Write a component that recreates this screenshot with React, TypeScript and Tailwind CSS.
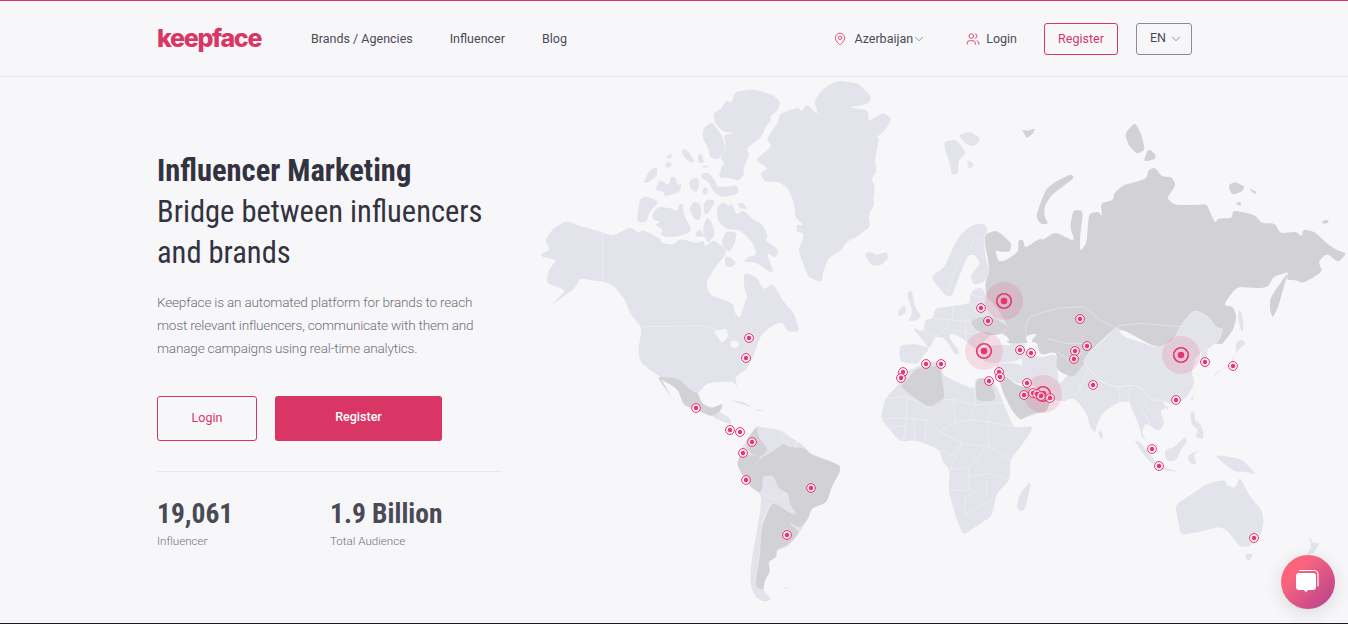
import React from 'react';
import { ChevronDown, MapPin, Users } from 'lucide-react';

// map is traced from crops, each group keeps the crop's 3x coordinates
const A = 'translate(540 80) scale(.3333)';
const B = 'translate(940 80) scale(.3333)';
const C = 'translate(640 340) scale(.3333)';
const D = 'translate(960 340) scale(.3333)';
const E = 'translate(880 220) scale(.3333)';
const F = 'translate(1060 300) scale(.3333)';

type Shape = [string, string];

const lightLand: Shape[] = [
  // north america
  [A, '5,520 30,510 15,480 40,445 80,422 110,435 190,458 220,468 270,440 295,458 310,450 360,475 365,490 400,495 420,475 470,490 490,480 495,500 520,480 550,500 560,520 535,550 520,570 498,610 510,645 580,670 585,700 600,715 610,680 622,650 612,620 612,578 650,590 670,630 700,610 730,665 762,700 780,755 745,755 725,725 690,740 660,770 640,830 618,870 585,890 595,940 585,905 540,905 500,910 475,940 430,975 415,930 360,890 330,870 300,845 295,810 305,745 285,720 270,700 255,660 225,620 195,605 150,600 120,595 105,625 70,650 30,678 60,650 75,630 50,620 20,610 25,570 50,540 5,530'],
  [A, '520,100 545,85 560,60 575,70 585,35 640,28 700,45 720,65 715,90 690,110 695,120 680,135 665,170 640,190 620,205 628,225 610,265 612,285 595,302 570,295 535,293 548,250 560,262 540,232 560,205 550,165 585,160 550,155 525,130'],
  [A, '490,145 515,125 545,165 558,205 535,240 510,232 505,205 488,175'],
  [A, '380,228 395,222 395,235 380,235'],
  [A, '375,250 392,245 395,258 380,265'],
  [A, '425,207 440,208 465,245 450,248 430,230'],
  [A, '473,225 485,220 492,245 485,252 475,245'],
  [A, '487,258 500,255 505,262 490,263'],
  [A, '310,310 330,268 352,262 350,290 322,308'],
  [A, '345,330 360,298 385,318 395,288 408,295 412,315 425,310 420,335 375,350 370,335'],
  [A, '448,300 475,292 478,320 468,338 450,325'],
  [A, '485,280 505,278 525,300 530,320 560,320 590,315 598,335 585,345 545,352 520,335 505,305 485,295'],
  [A, '488,325 500,322 505,340 490,345'],
  [A, '290,420 300,355 325,350 358,365 328,395 320,425 300,428'],
  [A, '335,405 355,380 395,385 410,395 420,370 430,372 430,400 455,450 440,462 410,470 378,472 360,462 370,450 345,435 362,425 340,420'],
  [A, '448,385 460,365 480,370 485,395 480,420 462,418'],
  [A, '490,375 500,358 525,362 515,385 500,405 492,398'],
  [A, '535,375 555,365 565,380 575,370 590,405 610,390 640,420 665,430 685,470 675,480 718,510 705,535 680,518 695,560 700,575 685,575 650,548 610,545 625,530 650,525 640,490 600,450 560,448 535,425 530,400'],
  [A, '592,370 610,368 622,388 600,385'],
  [A, '490,440 500,412 515,425 525,465 505,490 490,465'],
  [A, '465,460 480,448 495,470 470,470'],
  [A, '555,455 590,455 585,490 570,515 555,510 545,490'],
  [A, '555,530 570,530 590,550 570,563 555,555'],
  // greenland and iceland
  [A, '875,10 900,2 955,10 995,50 985,72 925,82 985,90 985,125 1030,97 1055,115 1040,145 1020,165 1005,170 1018,172 1005,240 1010,275 995,295 1005,325 1000,355 1003,375 985,405 990,435 985,445 950,470 920,485 905,510 865,535 850,575 845,605 825,600 805,590 785,540 775,510 790,475 790,460 770,455 770,435 790,435 765,410 765,380 745,325 715,305 675,305 660,280 685,265 645,240 695,200 680,175 715,125 720,100 775,82 785,95 800,72 835,105 822,65 845,30'],
  [A, '975,520 990,515 1010,525 1040,515 1045,535 1025,555 1000,558 985,545'],
  [B, '10,185 50,178 80,220 55,240 55,280 35,285 32,260 20,225'],
  [B, '55,165 90,155 122,175 105,198 80,195'],
  [B, '80,240 100,250 100,262 85,265'],
  // europe
  [A, '1100,640 1115,630 1125,680 1145,710 1125,722 1105,725 1118,695'],
  [A, '1073,695 1095,672 1097,700 1078,710'],
  [E, '155,168 195,140 215,90 240,45 275,15 310,10 325,30 310,50 318,120 330,150 315,185 280,195 272,165 290,145 300,130 285,105 265,105 245,150 230,190 215,230 195,225 175,200 165,190'],
  [E, '95,320 130,335 135,300 160,295 165,265 220,258 270,250 270,225 285,205 310,205 320,235 345,255 385,320 370,340 345,345 330,345 310,370 295,400 285,385 260,365 240,350 215,340 205,350 240,395 228,408 195,355 165,350 150,385 110,372 60,375 58,410 65,428 115,432 130,405 150,388'],
  [E, '300,385 345,375 385,375 430,385 440,410 400,425 345,430 310,425'],
  [E, '385,365 430,370 440,395 395,385'],
  [E, '430,395 455,385 480,415 530,400 535,490 565,520 560,545 520,540 480,520 450,490 425,440'],
  [E, '345,430 425,430 450,490 410,490 380,470 355,465'],
  // africa
  [C, '775,135 790,100 830,80 860,68 905,62 905,105 1005,150 1005,115 1065,125 1090,190 1120,260 1132,262 1182,258 1150,310 1110,360 1110,420 1070,460 1055,530 1000,565 970,585 950,540 925,450 930,390 905,360 900,330 830,300 780,305 745,265 722,235 735,175'],
  [D, '170,500 180,460 215,420 195,510 178,513'],
  // south america
  [C, '320,300 330,285 350,258 365,262 425,270 450,290 495,320 510,340 600,375 600,395 575,440 560,488 515,505 505,535 480,575 445,620 410,630 410,650 385,665 390,695 375,720 370,750 395,780 370,785 345,770 330,730 335,660 360,520 365,465 330,440 290,375 300,345 295,340'],
  [C, '215,230 240,215 270,235 275,255 250,245'],
  [C, '265,180 310,185 340,205 300,190'],
  [C, '345,208 375,210 350,214'],
  [C, '425,745 445,742 440,748'],
  // south east asia and oceania
  [F, '85,205 130,250 175,262 210,255 240,260 250,290 205,305 180,305 130,335 110,375 105,400 90,380 80,340 45,295 0,300 -20,270 0,250 40,210 70,185'],
  [F, '205,305 240,260 300,295 320,320 300,335 315,370 295,395 275,380 255,370 245,400 260,420 245,410 235,370'],
  [F, '455,235 490,205 520,185 530,150 525,130 545,118 558,130 535,150 525,165 505,200 470,215'],
  [F, '535,30 545,35 552,80 545,100 535,60'],
  [F, '115,395 125,392 130,412 120,418'],
  [F, '222,420 240,425 275,470 290,490 280,495 255,470'],
  [F, '290,495 355,515 340,515 300,508'],
  [F, '315,450 345,440 375,410 382,425 365,445 350,480 325,485 315,470'],
  [F, '385,465 420,450 400,465 410,490 395,495 385,480'],
  [F, '390,340 403,332 405,360 420,370 430,395 430,418 405,410 415,390 395,375'],
  [F, '465,465 510,470 550,480 590,525 560,515 525,515 490,490'],
  [F, '392,300 400,283 398,305'],
  [F, '315,322 325,318 325,330'],
  [D, '645,495 700,460 725,440 760,425 795,420 800,435 825,445 840,410 870,470 905,510 912,545 900,590 870,620 840,620 820,595 800,570 775,560 720,575 662,585 655,545'],
  [D, '855,640 880,642 870,662 860,660'],
  [D, '1045,585 1060,610 1080,610 1060,640 1040,645 1055,620'],
];

const darkLand: Shape[] = [
  // russia with central asia and mongolia, china is laid over it afterwards
  [B, '130,465 170,450 215,490 210,515 185,515 165,510 175,545 200,540 235,515 235,480 250,480 255,505 300,475 310,480 345,455 405,485 390,440 400,390 430,392 420,470 420,515 440,490 445,420 450,400 475,395 487,410 482,370 520,360 522,340 550,315 590,305 620,295 625,270 645,262 665,290 695,290 708,315 680,355 705,375 770,375 800,372 810,395 825,430 835,415 875,415 880,390 945,405 965,430 1005,430 1020,460 1070,455 1085,470 1090,448 1125,455 1160,490 1190,510 1220,520 1195,548 1160,520 1135,545 1148,575 1090,610 1065,600 1040,600 1045,575 1000,590 985,620 960,625 890,620 850,675 880,680 890,710 880,750 845,795 835,790 660,810 530,738 445,820 440,840 400,895 350,870 350,815 300,825 290,785 250,790 205,790 180,770 190,760 205,740 165,675 140,655 135,610 150,570'],
  [B, '990,660 1000,640 1045,575 1030,625 1015,680 998,715 990,690'],
  [B, '288,408 305,360 320,325 355,300 395,282 402,295 370,318 335,345 315,375 312,405 325,433 300,432'],
  [B, '555,160 585,127 605,165 615,210 590,222 565,195'],
  [B, '610,245 625,205 648,225 645,238'],
  [B, '865,315 885,305 915,320 905,335 875,345'],
  [B, '925,325 952,335 945,343'],
  [B, '885,372 900,365 905,378'],
  [B, '1145,425 1160,418 1168,428 1150,432'],
  [B, '245,150 265,152 285,145 280,160 260,175 252,160'],
  // ukraine, saudi arabia, egypt, algeria
  [E, '270,305 300,290 345,295 385,320 370,340 345,345 320,345 285,330'],
  [E, '355,470 380,470 410,495 450,505 480,530 510,545 500,575 470,580 440,590 420,600 395,570 370,520'],
  [C, '1008,115 1050,115 1070,183 1008,183'],
  [C, '780,140 795,125 830,85 900,75 905,105 915,178 868,205'],
  // mexico
  [C, '55,110 115,115 150,150 175,160 185,190 215,205 250,190 240,215 215,230 175,212 130,195 115,150 85,130 65,120'],
  [C, '60,110 95,175 75,145 55,115'],
  // south america
  [C, '340,380 370,350 405,330 430,310 445,320 495,325 510,343 600,375 600,395 575,440 560,488 515,505 505,535 480,565 445,545 470,520 450,495 445,460 415,445 400,405 365,410 345,400'],
  [C, '320,300 350,258 355,290 385,330 365,350 340,345 320,325'],
  [C, '300,345 335,345 365,350 340,380 345,400 370,405 365,460 330,440 290,375'],
  [C, '395,490 415,495 450,520 470,525 445,550 480,575 450,610 410,630 410,650 385,665 390,695 375,720 370,750 345,740 360,650 365,560'],
];

// laid over the dark block
const overDark: Shape[] = [
  [F, '170,78 190,110 240,125 300,145 345,115 360,80 400,30 440,45 470,85 490,85 475,125 440,150 420,160 395,190 410,175 395,215 405,250 380,295 340,315 300,300 270,300 240,260 210,255 175,262 130,250 85,205 70,185 85,160 120,130 140,110'],
  [F, '420,160 445,140 440,185 445,205 425,205'],
];

const water: Shape[] = [
  [E, '436,348 472,340 452,365 480,408 462,412 445,375'],
  [E, '345,345 372,342 392,362 345,372 322,362'],
  [A, '520,755 560,745 565,770 545,790 530,765'],
  [A, '575,780 600,790 590,805 570,800'],
  [C, '1028,545 1035,538 1038,545 1030,552'],
];

const borders: Shape[] = [
  [A, '188,455 188,605 225,625 255,670 300,735'],
  [A, '305,740 495,738 530,750 600,790'],
  [E, '435,320 450,290 530,265 610,260 660,300 700,320'],
  [E, '435,320 440,345'],
  [E, '500,355 560,370 600,370 640,375'],
  [E, '530,395 560,415 610,400'],
  [E, '95,320 130,335 165,350'],
  [E, '160,295 215,300 220,258'],
  [E, '215,300 270,305 285,330 320,345'],
  [E, '270,250 300,290'],
  [E, '200,310 240,350'],
  [E, '255,310 260,365'],
  [E, '165,350 205,320'],
  [E, '230,130 205,215'],
  [E, '270,90 280,60 310,50'],
  [E, '225,330 270,340 300,375'],
  [E, '270,225 310,232'],
  [E, '275,205 320,215'],
  [F, '170,78 240,70 300,75 360,80'],
  [F, '45,295 85,205'],
  [F, '175,262 180,305'],
  [F, '210,255 205,305'],
  [F, '250,310 285,350 315,370'],
  [F, '240,315 275,380'],
  [C, '735,175 800,170 865,205 905,180 940,178 945,250 900,275 860,240 800,235 730,235'],
  [C, '800,170 800,235 790,300'],
  [C, '860,240 855,300'],
  [C, '820,240 825,300'],
  [C, '745,265 800,255'],
  [C, '940,178 1005,195 1090,190'],
  [C, '1005,150 1005,195 990,240'],
  [C, '945,250 990,240 1040,245 1120,260'],
  [C, '1040,245 1060,200'],
  [C, '1040,245 1050,320'],
  [C, '900,275 965,310 1050,320 1110,360'],
  [C, '965,310 930,390 990,380 1040,320'],
  [C, '905,330 935,345 965,310'],
  [C, '985,380 990,450 920,450'],
  [C, '990,410 1050,400 1110,420'],
  [C, '1010,455 975,470 975,525 1055,480'],
  [C, '1040,420 1040,470'],
  [C, '365,460 400,480 445,460'],
  [C, '390,490 360,560'],
  [C, '425,300 440,275'],
  [C, '470,300 465,325'],
];

const pins = [
  [749, 338], [746, 358], [696, 408], [730, 430], [740, 432], [752, 442], [743, 453], [746, 480],
  [811, 488], [787, 535], [903, 372], [901, 378], [926, 364], [941, 364], [981, 308], [988, 321],
  [1020, 350], [1031, 353], [1080, 319], [1075, 351], [1074, 359], [1087, 346], [999, 372], [1000, 377],
  [989, 381], [1027, 383], [1024, 395], [1033, 393], [1037, 394], [1050, 398], [1041, 396], [1093, 385],
  [1205, 362], [1233, 366], [1176, 400], [1152, 449], [1159, 466], [1254, 538],
];
const bigPins = [[1004, 301], [984, 351], [1043, 394], [1181, 355]];

// rounds every corner a little so the coasts do not look cut with a ruler
const coast = (points: string) => {
  const pts = points.split(' ').map(p => p.split(',').map(Number));
  const n = pts.length;
  const mix = (a: number[], b: number[]) => `${a[0] + (b[0] - a[0]) * 0.3} ${a[1] + (b[1] - a[1]) * 0.3}`;
  return pts
    .map((p, i) => {
      const prev = pts[(i + n - 1) % n];
      const next = pts[(i + 1) % n];
      return `${i === 0 ? 'M' : 'L'}${mix(p, prev)}Q${p[0]} ${p[1]} ${mix(p, next)}`;
    })
    .join('') + 'Z';
};

const WorldMap = () => (
  <svg viewBox="540 77 808 546" className="w-[808px] h-[546px] shrink-0">
    {lightLand.map(([t, p], i) => <path key={i} transform={t} d={coast(p)} fill="#e3e4eb" />)}
    {darkLand.map(([t, p], i) => <path key={i} transform={t} d={coast(p)} fill="#d1d1d6" />)}
    {overDark.map(([t, p], i) => <path key={i} transform={t} d={coast(p)} fill="#e3e4eb" stroke="#f7f7fa" strokeWidth="1.5" />)}
    {water.map(([t, p], i) => <path key={i} transform={t} d={coast(p)} fill="#f7f7fa" />)}
    {borders.map(([t, p], i) => <polyline key={i} transform={t} points={p} fill="none" stroke="#f7f7fa" strokeOpacity=".75" strokeWidth="1.8" strokeLinejoin="round" />)}
    {bigPins.map(([x, y]) => (
      <g key={x}>
        <circle cx={x} cy={y} r="19" fill="#db3665" fillOpacity=".14" />
        <circle cx={x} cy={y} r="7.3" fill="none" stroke="#e9356f" strokeWidth="1.6" />
        <circle cx={x} cy={y} r="3.3" fill="#e9356f" />
      </g>
    ))}
    {pins.map(([x, y]) => (
      <g key={`${x}-${y}`}>
        <circle cx={x} cy={y} r="4.4" fill="#fff" fillOpacity=".55" stroke="#e9356f" strokeWidth="1" />
        <circle cx={x} cy={y} r="2.2" fill="#e9356f" />
      </g>
    ))}
  </svg>
);

const App = () => {
  return (
    <div className="relative h-[624px] overflow-hidden bg-[#f7f7fa] border-b border-[#1c1c1c] font-['Roboto',sans-serif] text-[#4a4a56]">
      <header className="h-[77px] border-t border-b border-t-[#d93665] border-b-[#e7e7ec] flex items-center pl-[157px] pr-[156px]">
        <a className="w-[154px] font-['Inter',sans-serif] font-extrabold text-[25px] leading-none tracking-[-1.3px] text-[#d93665] -mt-[1px]">keepface</a>
        <nav className="flex gap-[37px] text-[12.5px] mt-[1px]">
          <span>Brands / Agencies</span>
          <span>Influencer</span>
          <span>Blog</span>
        </nav>
        <div className="ml-auto flex items-center text-[12.5px]">
          <MapPin className="w-[14px] h-[14px] text-[#d93665]" strokeWidth={1.4} />
          <span className="ml-[7px] mt-[1px]">Azerbaijan</span>
          <ChevronDown className="w-[14px] h-[14px] -ml-[1px]" strokeWidth={1} />
          <Users className="w-[14px] h-[14px] ml-[40px] text-[#d93665]" strokeWidth={1.5} />
          <span className="ml-[6px] mt-[1px]">Login</span>
          <button className="ml-[27px] w-[74px] h-[32px] border border-[#d93665] rounded-[3px] text-[#d93665] mt-[1px]">Register</button>
          <button className="ml-[18px] w-[56px] h-[32px] border border-[#8c8c94] rounded-[3px] flex items-center pl-[13px] gap-[3px]">
            EN <ChevronDown className="w-[14px] h-[14px]" strokeWidth={1} />
          </button>
        </div>
      </header>
      <main className="flex">
        <section className="w-[540px] shrink-0 pl-[157px] pt-[73px]">
          <h1 className="text-[30.5px] leading-[41px] text-[#33333f] [font-stretch:75%] whitespace-nowrap font-normal">
            <b className="block font-bold">Influencer Marketing</b>
            <span className="block">Bridge between influencers</span>
            <span className="block">and brands</span>
          </h1>
          <p className="mt-[18px] text-[13.6px] leading-[23px] font-light text-[#6f6f78] whitespace-nowrap tracking-[-0.2px]">
            Keepface is an automated platform for brands to reach<br />
            most relevant influencers, communicate with them and<br />
            manage campaigns using real-time analytics.
          </p>
          <div className="mt-[36px] flex gap-[18px] text-[12.5px]">
            <button className="w-[100px] h-[45px] border border-[#d93665] rounded-[3px] text-[#d93665]">Login</button>
            <button className="w-[167px] h-[45px] bg-[#d93665] rounded-[3px] text-white font-medium pb-[2px]">Register</button>
          </div>
          <div className="mt-[30px] w-[345px] border-t border-[#e7e7ec] pt-[22px] flex">
            <div className="w-[173px]">
              <div className="text-[27.5px] leading-[40px] font-bold [font-stretch:75%]">19,061</div>
              <div className="text-[11.6px] leading-[14px] font-light text-[#6f6f78]">Influencer</div>
            </div>
            <div>
              <div className="text-[27.5px] leading-[40px] font-bold [font-stretch:75%]">1.9 Billion</div>
              <div className="text-[11.6px] leading-[14px] font-light text-[#6f6f78]">Total Audience</div>
            </div>
          </div>
        </section>
        <WorldMap />
      </main>
      <button className="absolute left-[1281px] top-[555px] w-[54px] h-[54px] rounded-full bg-gradient-to-br from-[#f9647c] from-30% to-[#b43e8e] shadow-[0_4px_18px_rgba(0,0,0,0.12)] flex items-center justify-center">
        <svg viewBox="0 0 30 30" className="w-[30px] h-[30px]">
          <path d="M6 3.5h15a4 4 0 0 1 4 4v12" fill="none" stroke="#fff" strokeWidth="1.2" />
          <path d="M6 6h14a3 3 0 0 1 3 3v11a3 3 0 0 1-3 3h-5l-2 2.5-2-2.5H6a3 3 0 0 1-3-3V9a3 3 0 0 1 3-3z" fill="#fff" />
        </svg>
      </button>
    </div>
  );
};

export default App;
